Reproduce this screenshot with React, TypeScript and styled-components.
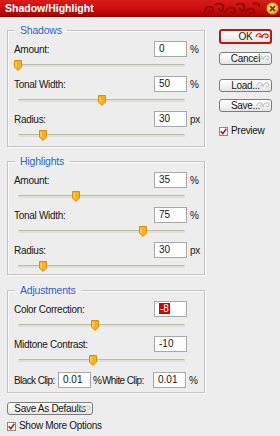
import React from "react";
import styled, { createGlobalStyle } from "styled-components";

const Global = createGlobalStyle`
  html, body { margin: 0; padding: 0; background: #ededed; }
  body { font-family: "Liberation Sans", Arial, sans-serif; }
`;

const Window = styled.div`
  width: 280px;
  height: 436px;
  background: #ededed;
  font-family: "Liberation Sans", Arial, sans-serif;
  font-size: 10px;
  letter-spacing: -0.3px;
  color: #161616;
  overflow: hidden;
`;

const TitleBar = styled.div`
  height: 17px;
  box-sizing: border-box;
  display: flex;
  align-items: center;
  justify-content: space-between;
  padding: 0 1px 0 5px;
  background: linear-gradient(#d81c1c, #c80e0e 55%, #a80202);
  border-bottom: 1px solid #880000;
`;

const Title = styled.div`
  color: #fff;
  font-weight: bold;
  font-size: 10.5px;
  letter-spacing: 0;
`;

const TitleRight = styled.div`
  display: flex;
  align-items: center;
  gap: 3px;
`;

const Close = styled.div`
  width: 13px;
  height: 13px;
  border-radius: 50%;
  box-sizing: border-box;
  border: 1px solid #b86a00;
  background: radial-gradient(circle at 40% 35%, #ffe9a0, #f6b530 60%, #e08a10);
  display: flex;
  align-items: center;
  justify-content: center;
`;

const Main = styled.div`
  display: flex;
  padding: 7px 0 0 7px;
`;

const LeftCol = styled.div`
  width: 198px;
  display: flex;
  flex-direction: column;
`;

const Group = styled.fieldset<{ $mt?: number; $pb?: number }>`
  margin: ${(p) => p.$mt ?? 0}px 0 0 0;
  padding: 5px 6px ${(p) => p.$pb ?? 0}px 6px;
  border: 1px solid #c4c4c4;
  box-shadow: inset 1px 1px 0 #fafafa, 1px 1px 0 #fafafa;
  min-width: 0;
  width: 198px;
  box-sizing: border-box;
`;

const Legend = styled.legend`
  margin-left: 1px;
  padding: 0 5px;
  color: #2e5fd2;
  font-size: 10.5px;
  line-height: 12px;
  letter-spacing: -0.2px;
`;

const Row = styled.div`
  display: grid;
  grid-template-columns: 1fr 33px 11px;
  align-items: center;
  height: 16px;
`;

const Label = styled.span`
  white-space: nowrap;
`;

const Field = styled.div`
  width: 33px;
  height: 16px;
  box-sizing: border-box;
  border: 1px solid #a8a8a8;
  background: #fff;
  padding-left: 4px;
  line-height: 14px;
  white-space: nowrap;
  letter-spacing: 0;
`;

const Selected = styled.span`
  background: #c80808;
  color: #fff;
  padding: 0 1px;
`;

const Unit = styled.span`
  padding-left: 3px;
  white-space: nowrap;
`;

const Slider = styled.div<{ $h: number }>`
  height: ${(p) => p.$h}px;
  box-sizing: border-box;
  padding: 7px 0 0 4px;
`;

const Track = styled.div`
  position: relative;
  width: 167px;
  height: 3px;
  box-sizing: border-box;
  border-top: 1px solid #b9b9ad;
  background: #e0e0d6;
  border-radius: 2px;
`;

const Thumb = styled.svg`
  position: absolute;
  top: -5px;
  margin-left: -4px;
`;

const ClipRow = styled.div`
  display: grid;
  grid-template-columns: 44px 33px 11px 51px 33px 11px;
  align-items: center;
  height: 16px;
  margin-top: 1px;
  letter-spacing: -0.6px;
`;

const ClipUnit = styled.span`
  padding-left: 2px;
`;

const RightCol = styled.div`
  margin-left: 14px;
  width: 53px;
  display: flex;
  flex-direction: column;
  padding-top: 5px;
`;

const Button = styled.div<{ $mt?: number; $primary?: boolean; $w?: number }>`
  position: relative;
  margin-top: ${(p) => p.$mt ?? 0}px;
  width: ${(p) => p.$w ?? 53}px;
  height: ${(p) => (p.$primary ? 15 : 13)}px;
  box-sizing: border-box;
  border: ${(p) => (p.$primary ? "2px solid #c51212" : "1px solid #7c7c7c")};
  border-radius: 3px;
  background: linear-gradient(#ffffff, #f4f4f4 50%, #e4e4e4);
  display: flex;
  align-items: center;
  justify-content: center;
  font-size: 10px;
  line-height: 11px;
  white-space: nowrap;
`;

const Ornament = styled.svg`
  position: absolute;
  right: 1px;
  top: 0px;
`;

const CheckRow = styled.div<{ $mt?: number }>`
  display: flex;
  align-items: center;
  gap: 3px;
  margin-top: ${(p) => p.$mt ?? 0}px;
  line-height: 12px;
  white-space: nowrap;
`;

const Box = styled.div`
  width: 9px;
  height: 9px;
  box-sizing: border-box;
  border: 1px solid #8a8a8a;
  background: #fff;
  display: flex;
  align-items: center;
  justify-content: center;
`;

const Bottom = styled.div`
  display: flex;
  flex-direction: column;
  margin-top: 9px;
`;

type SliderRow = { label: string; value: string; unit: string; pct: number; selected?: boolean };

const shadows: SliderRow[] = [
  { label: "Amount:", value: "0", unit: "%", pct: 0 },
  { label: "Tonal Width:", value: "50", unit: "%", pct: 50 },
  { label: "Radius:", value: "30", unit: "px", pct: 15 },
];
const highlights: SliderRow[] = [
  { label: "Amount:", value: "35", unit: "%", pct: 35 },
  { label: "Tonal Width:", value: "75", unit: "%", pct: 75 },
  { label: "Radius:", value: "30", unit: "px", pct: 15 },
];
const adjustments: SliderRow[] = [
  { label: "Color Correction:", value: "-8", unit: "", pct: 46, selected: true },
  { label: "Midtone Contrast:", value: "-10", unit: "", pct: 45 },
];

const ThumbIcon = ({ pct }: { pct: number }) => (
  <Thumb width="8" height="11" viewBox="0 0 8 11" style={{ left: `${pct}%` }}>
    <path d="M0.5 0.5 H7.5 V7 L4 10.5 L0.5 7 Z" fill="#f7b21f" stroke="#d88d0c" strokeWidth="1" />
    <path d="M2 2 V7" stroke="#fde08a" strokeWidth="1" />
  </Thumb>
);

const SliderLine = ({ pct, h }: { pct: number; h: number }) => (
  <Slider $h={h}>
    <Track>
      <ThumbIcon pct={pct} />
    </Track>
  </Slider>
);

const Rows = ({ rows, lastH = 19 }: { rows: SliderRow[]; lastH?: number }) => (
  <>
    {rows.map((r, i) => (
      <React.Fragment key={i}>
        <Row>
          <Label>{r.label}</Label>
          <Field>{r.selected ? <Selected>{r.value}</Selected> : r.value}</Field>
          <Unit>{r.unit}</Unit>
        </Row>
        <SliderLine pct={r.pct} h={i === rows.length - 1 ? lastH : 19} />
      </React.Fragment>
    ))}
  </>
);

const Curl = ({ color }: { color: string }) => (
  <Ornament width="14" height="9" viewBox="0 0 14 9">
    <path
      d="M1 6 C1 2.5 5 1.5 6 4 C6.8 6 4.2 6.5 4 5 M7 7 C7 3 12 1.5 13 4.5 C13.6 7 10.5 7.5 10.3 5.5"
      fill="none"
      stroke={color}
      strokeWidth="1.2"
    />
  </Ornament>
);

const Check = () => (
  <svg width="7" height="7" viewBox="0 0 7 7">
    <path d="M0.8 3.2 L2.8 5.6 L6.3 0.8" fill="none" stroke="#d01010" strokeWidth="1.6" />
  </svg>
);

const TitleSwirl = () => (
  <svg width="60" height="15" viewBox="0 0 60 15">
    <g fill="none" stroke="#8e0606" strokeWidth="1.6">
      <path d="M2 11 C2 5 9 4 10 8 C11 11 6 12 6 9" />
      <path d="M12 4 C16 1 22 3 20 8 C19 11 15 10 16 7" />
      <path d="M22 12 C24 6 31 5 32 9 C33 12 28 13 28 10" />
      <path d="M33 4 C37 1 43 3 41 8 C40 11 36 10 37 7" />
      <path d="M42 12 C44 7 50 6 51 10 C52 13 47 13 47 11" />
      <path d="M50 3 C53 1 57 3 56 6" />
    </g>
  </svg>
);

export default function App() {
  return (
    <Window>
      <Global />
      <TitleBar>
        <Title>Shadow/Highlight</Title>
        <TitleRight>
          <TitleSwirl />
          <Close>
            <svg width="7" height="7" viewBox="0 0 7 7">
              <path d="M1 1 L6 6 M6 1 L1 6" stroke="#5a2a00" strokeWidth="1.6" />
            </svg>
          </Close>
        </TitleRight>
      </TitleBar>
      <Main>
        <LeftCol>
          <Group>
            <Legend>Shadows</Legend>
            <Rows rows={shadows} />
          </Group>
          <Group $mt={8}>
            <Legend>Highlights</Legend>
            <Rows rows={highlights} lastH={16} />
          </Group>
          <Group $mt={9} $pb={4}>
            <Legend>Adjustments</Legend>
            <Rows rows={adjustments} />
            <ClipRow>
              <Label>Black Clip:</Label>
              <Field>0.01</Field>
              <ClipUnit>%</ClipUnit>
              <Label>White Clip:</Label>
              <Field>0.01</Field>
              <Unit>%</Unit>
            </ClipRow>
          </Group>
          <Bottom>
            <Button $w={86}>
              Save As Defaults
              <Curl color="#c8c8c8" />
            </Button>
            <CheckRow $mt={5}>
              <Box>
                <Check />
              </Box>
              Show More Options
            </CheckRow>
          </Bottom>
        </LeftCol>
        <RightCol>
          <Button $primary>
            OK
            <Curl color="#d21a1a" />
          </Button>
          <Button $mt={8}>
            Cancel
            <Curl color="#c8c8c8" />
          </Button>
          <Button $mt={14}>
            Load...
            <Curl color="#c8c8c8" />
          </Button>
          <Button $mt={7}>
            Save...
            <Curl color="#c8c8c8" />
          </Button>
          <CheckRow $mt={13}>
            <Box>
              <Check />
            </Box>
            Preview
          </CheckRow>
        </RightCol>
      </Main>
    </Window>
  );
}
